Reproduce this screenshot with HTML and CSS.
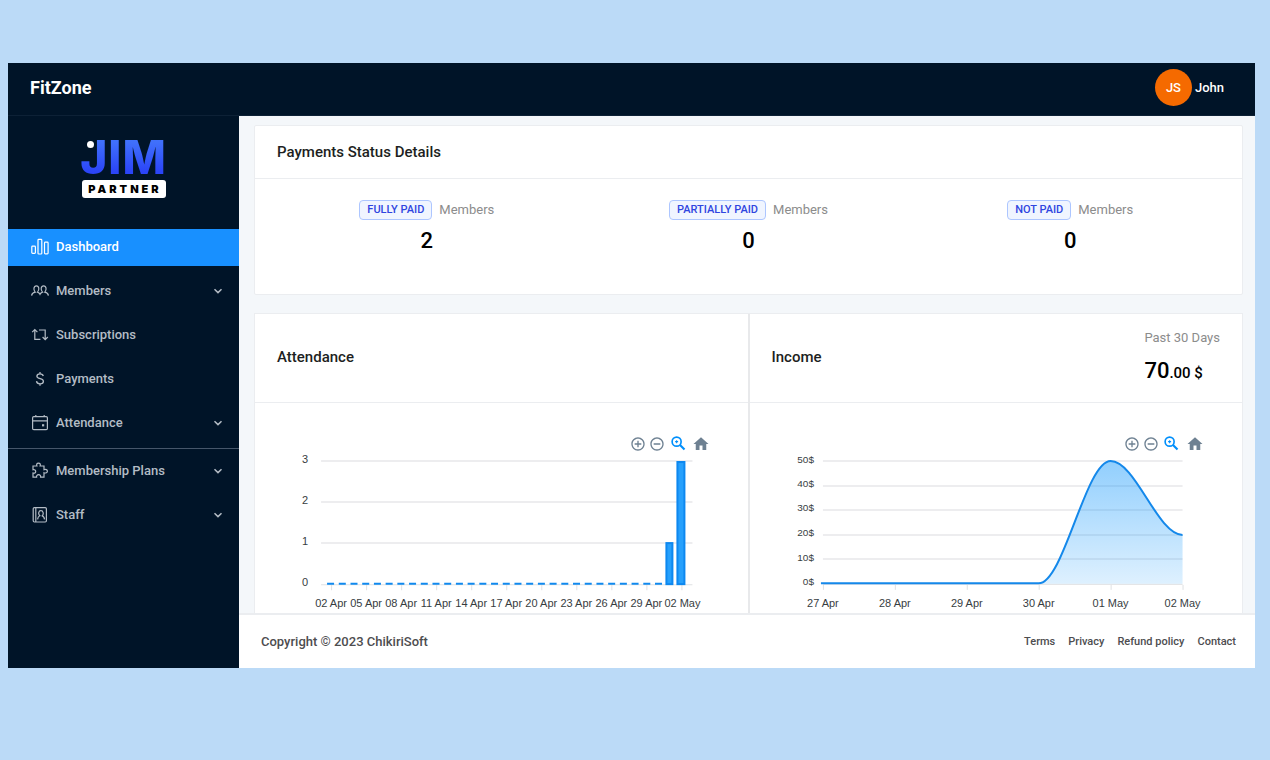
FILE: index.html
```html
<!DOCTYPE html>
<html lang="en">
<head>
<meta charset="utf-8">
<title>FitZone</title>
<link rel="stylesheet" href="styles.css">
</head>
<body>
<svg class="sprite" aria-hidden="true">
  <symbol id="i-chevron" viewBox="0 0 10 10"><path d="M1.5 3.2 5 6.6l3.500-3.400" fill="none" stroke="currentColor" stroke-width="1.500"/></symbol>
  <symbol id="i-plus" viewBox="0 0 24 24"><path fill="currentColor" d="M13 7h-2v4H7v2h4v4h2v-4h4v-2h-4V7zm-1-5C6.480 2 2 6.480 2 12s4.480 10 10 10 10-4.480 10-10S17.520 2 12 2zm0 18c-4.410 0-8-3.590-8-8s3.590-8 8-8 8 3.590 8 8-3.590 8-8 8z"/></symbol>
  <symbol id="i-minus" viewBox="0 0 24 24"><path fill="currentColor" d="M7 11v2h10v-2H7zm5-9C6.480 2 2 6.480 2 12s4.480 10 10 10 10-4.480 10-10S17.520 2 12 2zm0 18c-4.410 0-8-3.590-8-8s3.590-8 8-8 8 3.590 8 8-3.590 8-8 8z"/></symbol>
  <symbol id="i-zoom" viewBox="2 2 20 20"><g fill="none" stroke="currentColor" stroke-width="2.200"><circle cx="9.500" cy="9.500" r="6"/><path d="m14 14 6 6" stroke-width="2.800"/></g><path fill="currentColor" d="M11.500 8.800v1.400h-1.300v1.300H8.800v-1.300H7.500V8.800h1.300V7.500h1.400v1.300z"/></symbol>
  <symbol id="i-home" viewBox="0 0 24 24"><path fill="currentColor" d="M10 20v-6h4v6h5v-8h3L12 3 2 12h3v8z"/></symbol>
</svg>
<div class="app">
  <header class="topbar">
    <span class="brand">FitZone</span>
    <button class="user" type="button"><span class="avatar">JS</span>John</button>
  </header>
  <div class="shell">
    <nav class="sidebar" aria-label="Main">
      <div class="logo">
        <span class="logo-mark">JIM</span>
        <span class="logo-tag">PARTNER</span>
      </div>
      <ul class="menu">
        <li><a class="item active" href="#"><svg class="icon" viewBox="0 0 18 18"><g fill="none" stroke="currentColor" stroke-width="1.200"><rect x="0.800" y="8.200" width="3.600" height="7.200" rx="0.800"/><rect x="7" y="1.400" width="3.800" height="14.600" rx="0.800"/><rect x="13.500" y="4.200" width="3.600" height="11.600" rx="0.800"/></g></svg>Dashboard</a></li>
        <li><a class="item" href="#"><svg class="icon" viewBox="0 0 18 18"><g fill="none" stroke="currentColor" stroke-width="1.200"><path d="M.6 13.600c.2-2.200 1.600-3 3.600-3.500-2.100-2-1.600-6.300 1.200-6.300s3.200 4.300 1.100 6.300c1.200.4 2 1 2.500 2.100.5-1.100 1.300-1.700 2.500-2.100-2.100-2-1.700-6.300 1.100-6.300s3.300 4.300 1.200 6.300c2 .5 3.400 1.300 3.600 3.500"/></g></svg>Members<svg class="chevron"><use href="#i-chevron"/></svg></a></li>
        <li><a class="item" href="#"><svg class="icon" viewBox="0 0 18 18"><g fill="none" stroke="currentColor" stroke-width="1.200"><path d="M1.200 6.200 3.800 3.600l2.600 2.600M3.800 3.900v9.500h5.600M8 4h6.200v9.200M11.600 11l2.600 2.600 2.600-2.600"/></g></svg>Subscriptions</a></li>
        <li><a class="item" href="#"><svg class="icon" viewBox="0 0 18 18"><g fill="none" stroke="currentColor" stroke-width="1.300"><path d="M12.300 6C12 4.500 10.800 3.800 9 3.800S5.900 4.700 5.900 6.200c0 3.300 6.500 1.600 6.500 5 0 1.600-1.400 2.600-3.300 2.600-2 0-3.400-.9-3.600-2.600M9 2v1.800M9 13.800v2"/></g></svg>Payments</a></li>
        <li><a class="item" href="#"><svg class="icon" viewBox="0 0 18 18"><g fill="none" stroke="currentColor" stroke-width="1.200"><rect x="1.600" y="2.600" width="14.800" height="13" rx="1.200"/><path d="M1.600 6.800h14.800M4.800 1v2M13.200 1v2"/></g><path fill="currentColor" d="M11 10.200h2.200v2.200H11z"/></svg>Attendance<svg class="chevron"><use href="#i-chevron"/></svg></a></li>
      </ul>
      <hr class="divider">
      <ul class="menu">
        <li><a class="item" href="#"><svg class="icon" viewBox="0 0 18 18"><path fill="none" stroke="currentColor" stroke-width="1.200" d="M2 4h3.900C5.200 2.300 6 1.100 7.500 1.100S9.800 2.300 9.100 4H13v3.700c1.800-.7 3.400 0 3.400 1.500s-1.600 2.200-3.400 1.500v4.500H9.600c.3-1.600-.6-2.600-2-2.600s-2.300 1-2 2.600H2v-4.100c1.700.4 2.700-.3 2.700-1.600S3.700 7.300 2 7.700z"/></svg>Membership Plans<svg class="chevron"><use href="#i-chevron"/></svg></a></li>
        <li><a class="item" href="#"><svg class="icon" viewBox="0 0 18 18"><g fill="none" stroke="currentColor" stroke-width="1.200"><rect x="2.200" y="1.600" width="13.200" height="14.400" rx="1.200"/><path d="M4.800 1.600V16M6.600 13.400c.2-2.300 1-3.200 2.200-3.600C6.900 8 7.500 4.700 9.900 4.700S13 8 11.200 9.800c1.400.4 2.100 1.300 2.300 3.600"/></g></svg>Staff<svg class="chevron"><use href="#i-chevron"/></svg></a></li>
      </ul>
    </nav>
    <div class="page">
      <main class="content">
        <section class="card">
          <h2 class="card-head">Payments Status Details</h2>
          <div class="stats">
            <div class="stat"><p class="stat-label"><span class="tag">FULLY PAID</span>Members</p><p class="stat-value">2</p></div>
            <div class="stat"><p class="stat-label"><span class="tag">PARTIALLY PAID</span>Members</p><p class="stat-value">0</p></div>
            <div class="stat"><p class="stat-label"><span class="tag">NOT PAID</span>Members</p><p class="stat-value">0</p></div>
          </div>
        </section>
        <div class="panels">
          <section class="panel">
            <div class="panel-head"><h2>Attendance</h2></div>
            <div class="tools">
              <button type="button" aria-label="Zoom in"><svg><use href="#i-plus"/></svg></button>
              <button type="button" aria-label="Zoom out"><svg><use href="#i-minus"/></svg></button>
              <button class="wide selected" type="button" aria-label="Selection zoom"><svg><use href="#i-zoom"/></svg></button>
              <button class="wide" type="button" aria-label="Reset zoom"><svg><use href="#i-home"/></svg></button>
            </div>
            <svg class="chart" viewBox="0 0 493 160" role="img" aria-label="Attendance by day">
              <path class="grid" d="M66 9H437M66 50H437M66 91H437"/>
              <path class="axis" d="M66 132.500H437M76.500 133v5M111.500 133v5M146.500 133v5M181.500 133v5M216.500 133v5M251.500 133v5M286.500 133v5M321.500 133v5M356.500 133v5M391.500 133v5M426.500 133v5"/>
              <path class="zero" d="M72 131.500H408"/>
              <g class="bar"><rect x="411" y="91" width="6" height="41"/><rect x="422" y="10" width="7" height="122"/></g>
              <g class="ylab"><text x="53" y="11">3</text><text x="53" y="52">2</text><text x="53" y="93">1</text><text x="53" y="134">0</text></g>
              <g class="xlab"><text x="76" y="155">02 Apr</text><text x="111" y="155">05 Apr</text><text x="146" y="155">08 Apr</text><text x="181" y="155">11 Apr</text><text x="216" y="155">14 Apr</text><text x="251" y="155">17 Apr</text><text x="286" y="155">20 Apr</text><text x="321" y="155">23 Apr</text><text x="356" y="155">26 Apr</text><text x="391" y="155">29 Apr</text><text x="427" y="155">02 May</text></g>
            </svg>
          </section>
          <section class="panel">
            <div class="panel-head"><h2>Income</h2>
              <div class="total"><p class="total-label">Past 30 Days</p><p class="total-value">70<small>.00 $</small></p></div>
            </div>
            <div class="tools">
              <button type="button" aria-label="Zoom in"><svg><use href="#i-plus"/></svg></button>
              <button type="button" aria-label="Zoom out"><svg><use href="#i-minus"/></svg></button>
              <button class="wide selected" type="button" aria-label="Selection zoom"><svg><use href="#i-zoom"/></svg></button>
              <button class="wide" type="button" aria-label="Reset zoom"><svg><use href="#i-home"/></svg></button>
            </div>
            <svg class="chart" viewBox="0 0 493 160" role="img" aria-label="Income by day">
              <defs><linearGradient id="area" x1="0" y1="0" x2="0" y2="1"><stop offset="0" stop-color="#008ffb" stop-opacity=".43"/><stop offset="1" stop-color="#008ffb" stop-opacity=".13"/></linearGradient></defs>
              <path class="grid" d="M73 9H433M73 34H433M73 58H433M73 83H433M73 107H433"/>
              <path class="axis" d="M73 132.500H433M73.500 133v5M145.500 133v5M217.500 133v5M289.500 133v5M361.500 133v5M433.500 133v5"/>
              <path fill="url(#area)" d="M289 132C314 132 336 9 361 9S408 83 433 83V132z"/>
              <path class="line" d="M71 131.500H289C314 131.500 336 9 361 9S408 83 433 83"/>
              <g class="ylab small"><text x="64" y="11">50$</text><text x="64" y="35">40$</text><text x="64" y="59">30$</text><text x="64" y="84">20$</text><text x="64" y="109">10$</text><text x="64" y="133">0$</text></g>
              <g class="xlab"><text x="73" y="155">27 Apr</text><text x="145" y="155">28 Apr</text><text x="217" y="155">29 Apr</text><text x="289" y="155">30 Apr</text><text x="361" y="155">01 May</text><text x="433" y="155">02 May</text></g>
            </svg>
          </section>
        </div>
      </main>
      <footer class="footer">
        <p>Copyright © 2023 ChikiriSoft</p>
        <div class="links"><a href="#">Terms</a><a href="#">Privacy</a><a href="#">Refund policy</a><a href="#">Contact</a></div>
      </footer>
    </div>
  </div>
</div>
</body>
</html>
```
FILE: styles.css
```css
* { box-sizing: border-box; }
body {
  margin: 0;
  padding: 63px 15px 92px 8px;
  background: #bbdaf7;
  font: 500 13px/20px Roboto, "Liberation Sans", sans-serif;
  color: #1d1f22;
}
h2, p, ul { margin: 0; padding: 0; }
h2 { font-size: 15px; font-weight: 500; }
ul { list-style: none; }
a { color: inherit; text-decoration: none; }
button { padding: 0; border: 0; background: none; font: inherit; color: inherit; }
.sprite { display: none; }

.app { display: flex; flex-direction: column; min-height: calc(100vh - 155px); background: #001428; }
.topbar {
  display: flex;
  align-items: center;
  justify-content: space-between;
  height: 53px;
  padding: 0 31px 3px 22px;
  border-bottom: 1px solid #0d2136;
  color: #fff;
}
.brand { font-size: 18px; font-weight: 700; }
.user { display: flex; align-items: center; gap: 3px; }
.avatar { width: 37px; height: 37px; border-radius: 50%; background: #f56a00; line-height: 37px; }

.shell { display: flex; flex: 1; }
.sidebar { flex: none; width: 231px; color: #b3bcc5; }
.logo { display: flex; flex-direction: column; align-items: center; gap: 2px; height: 113px; padding-top: 20px; }
.logo-mark {
  position: relative;
  font: 800 46px/42px Inter, sans-serif;
  letter-spacing: 1px;
  background: linear-gradient(#4070fb 15%, #2b45f8 85%);
  -webkit-background-clip: text;
  background-clip: text;
  color: transparent;
}
.logo-mark::before {
  content: "";
  position: absolute;
  left: 7px;
  top: 5px;
  width: 7px;
  height: 7px;
  border-radius: 50%;
  background: #fff;
}
.logo-tag {
  width: 84px;
  height: 18px;
  padding-left: 3px;
  border-radius: 3px;
  background: #fff;
  color: #000;
  font: 900 11px/18px Inter, sans-serif;
  letter-spacing: 3px;
  text-align: center;
}
.menu { display: flex; flex-direction: column; gap: 7px; }
.item { display: flex; align-items: center; gap: 7px; height: 37px; padding: 0 16px 2px 23px; }
.active { background: #1890ff; color: #fff; }
.icon { width: 18px; height: 18px; }
.chevron { width: 10px; height: 10px; margin-left: auto; }
.divider { margin: 6px 0 4px; border: 0; border-top: 1px solid #46566a; }

.page { display: flex; flex: 1; flex-direction: column; min-width: 0; background: #f4f7fa; }
.content { display: flex; flex: 1; flex-direction: column; gap: 18px; padding: 9px 12px 0 15px; }
.card { border: 1px solid #ebedf0; border-radius: 2px; background: #fff; }
.card-head { padding: 16px 22px; border-bottom: 1px solid #ebedf0; }
.stats { display: grid; grid-template-columns: repeat(3, 1fr); padding: 21px 11px 38px; text-align: center; }
.stat-label { display: flex; align-items: center; justify-content: center; gap: 7px; color: #8c8c8c; font-weight: 400; }
.tag {
  padding: 0 7px;
  border: 1px solid #adc6ff;
  border-radius: 4px;
  background: #f0f5ff;
  color: #2f45e0;
  font-size: 11px;
  font-weight: 500;
  line-height: 18px;
}
.stat-value { padding-top: 6px; color: #000; font-size: 22px; line-height: 30px; }

.panels { display: grid; flex: 1; grid-template-columns: 1fr 1fr; border: 1px solid #ebedf0; border-bottom: 0; background: #fff; }
.panel { min-width: 0; }
.panel + .panel { margin-left: -1px; border-left: 2px solid #e8e9eb; }
.panel-head {
  display: flex;
  align-items: center;
  justify-content: space-between;
  height: 89px;
  padding: 0 22px;
  border-bottom: 1px solid #ebedf0;
}
.panel-head h2 { padding-bottom: 2px; }
.total-label { color: #8c8c8c; font-weight: 400; }
.total-value { padding-top: 8px; color: #000; font-size: 22px; line-height: 30px; }
.total-value small { font-size: 15px; }
.tools { display: flex; justify-content: flex-end; height: 49px; padding: 32px 36px 0 0; color: #6e8192; }
.tools button { display: flex; align-items: center; justify-content: center; width: 19px; height: 17px; }
.tools .wide { width: 23px; }
.tools svg { width: 16px; height: 16px; }
.tools .wide svg { width: 18px; height: 18px; }
.tools .selected { color: #008ffb; }
.tools .selected svg { width: 15px; height: 15px; }
.chart { display: block; width: 100%; height: auto; }
.grid { fill: none; stroke: #ededef; stroke-width: 2; }
.axis { fill: none; stroke: #dfe1e3; }
.zero { fill: none; stroke: #1089ee; stroke-width: 2; stroke-dasharray: 7 4.700; }
.bar { fill: #26a0fc; stroke: #0d88f0; stroke-width: 2; }
.line { fill: none; stroke: #1488ea; stroke-width: 2; }
.xlab, .ylab { fill: #373d3f; font: 400 11px "Liberation Sans", Arial, sans-serif; }
.xlab { text-anchor: middle; }
.ylab { text-anchor: end; }
.ylab.small { font-size: 10px; }

.footer {
  display: flex;
  align-items: center;
  justify-content: space-between;
  height: 55px;
  padding: 0 19px 0 22px;
  border-top: 2px solid #ebedf0;
  background: #fff;
  color: #4d4d4f;
}
.links { display: flex; gap: 13px; font-size: 11px; }
```
